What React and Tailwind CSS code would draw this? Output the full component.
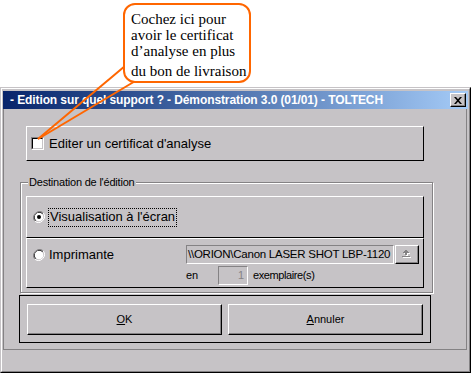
import React from "react";

const face = "bg-[#c6c3c6]";
const raised = "border border-t-white border-l-white border-b-black border-r-black";
const sunken = "border border-t-[#848284] border-l-[#848284] border-b-white border-r-white";

function Radio({ checked }) {
  return (
    <svg width="12" height="12" viewBox="0 0 12 12" className="shrink-0">
      <path d="M10.2 1.8 A6 6 0 0 0 1.8 10.2" fill="none" stroke="#848284" strokeWidth="1" />
      <path d="M9.5 2.5 A5 5 0 0 0 2.5 9.5" fill="none" stroke="#000" strokeWidth="1" />
      <path d="M1.8 10.2 A6 6 0 0 0 10.2 1.8" fill="none" stroke="#fff" strokeWidth="1" />
      <circle cx="6" cy="6" r="4.3" fill="#fff" />
      {checked && <circle cx="6" cy="6" r="2" fill="#000" />}
    </svg>
  );
}

function Checkbox() {
  return (
    <span className={`w-[13px] h-[13px] shrink-0 ${sunken}`}>
      <span className="block w-full h-full border border-t-black border-l-black border-b-[#c6c3c6] border-r-[#c6c3c6] bg-white" />
    </span>
  );
}

function Button({ children }) {
  return (
    <button className={`w-[195px] h-[31px] ${raised} shadow-[inset_-1px_-1px_0_#848284] text-[11px] text-black flex items-center justify-center`}>
      {children}
    </button>
  );
}

export default function App() {
  return (
    <div className="relative w-[471px] h-[373px] bg-white overflow-hidden font-['Liberation_Sans',Arial,sans-serif]">
      <div className="h-[87px]" />

      {/* window */}
      <div className={`h-[286px] ${face} border border-t-[#c6c3c6] border-l-[#c6c3c6] border-b-black border-r-black`}>
        <div className="h-full flex flex-col border border-t-white border-l-white border-b-[#848284] border-r-[#848284] pt-[2px] px-[1px] pb-[1px]">
          {/* title bar */}
          <div className="h-[18px] shrink-0 flex items-center justify-between pl-[7px] pr-[2px] bg-gradient-to-r from-[#08246b] to-[#a5cbf7]">
            <span className="text-white font-bold text-[12px] tracking-[-0.1px] whitespace-nowrap">
              - Edition sur quel support ? - Démonstration 3.0 (01/01) - TOLTECH
            </span>
            <span className={`w-[16px] h-[14px] flex items-center justify-center ${raised} shadow-[inset_-1px_-1px_0_#848284] bg-[#c6c3c6]`}>
              <svg width="8" height="7" viewBox="0 0 8 7">
                <path d="M0 0h2l2 2.2L6 0h2L5 3.5 8 7H6L4 4.8 2 7H0l3-3.5z" fill="#000" />
              </svg>
            </span>
          </div>

          {/* client panel */}
          <div className="h-[241px] w-[464px] shrink-0 border-l border-r border-b border-[#848284] flex flex-col pl-[15px] pt-[17px]">
            {/* checkbox frame */}
            <div className={`ml-[7px] w-[398px] h-[35px] ${raised} flex items-center pl-[4px]`}>
              <Checkbox />
              <span className="ml-[5px] text-[13px] text-black">Editer un certificat d'analyse</span>
            </div>

            {/* group box */}
            <div className="relative mt-[21px] ml-[1px] w-[413px] h-[111px] border border-[#848284] shadow-[inset_1px_1px_0_#fff,1px_1px_0_#fff] pl-[5px] pt-[13px]">
              <span className={`absolute -top-[8px] left-[7px] px-[1px] ${face} text-[11px] tracking-[-0.2px] text-black leading-[14px]`}>
                Destination de l'édition
              </span>
              <div className={`w-[398px] h-[42px] ${raised} flex items-center pl-[6px]`}>
                <Radio checked />
                <span className="ml-[3px] h-[19px] flex items-center px-px border border-dotted border-black text-[13px] text-black">
                  Visualisation à l'écran
                </span>
              </div>
              <div className={`w-[398px] h-[50px] ${raised} flex pl-[6px] pt-[6px]`}>
                <div className="w-[153px] h-[19px] flex items-center">
                  <Radio />
                  <span className="ml-[4px] text-[13px] text-black">Imprimante</span>
                </div>
                <div className="flex flex-col gap-[2px]">
                  <div className="flex gap-[1px]">
                    <div className={`w-[208px] h-[19px] ${sunken} flex items-center pl-[1px] overflow-hidden whitespace-nowrap text-[11.5px] tracking-[-0.25px] text-black`}>
                      \\ORION\Canon LASER SHOT LBP-1120
                    </div>
                    <div className={`w-[24px] h-[19px] ${raised} shadow-[inset_-1px_-1px_0_#848284] flex items-center justify-center`}>
                      <svg width="10" height="9" viewBox="0 0 10 9">
                        <g fill="#fff" transform="translate(1 1)">
                          <path d="M4 0h1v1h1v1h1v1H5v2H3V3H1V2h1V1h1V0z" />
                          <rect x="0" y="6" width="8" height="1" />
                        </g>
                        <g fill="#848284">
                          <path d="M4 0h1v1h1v1h1v1H5v2H3V3H1V2h1V1h1V0z" />
                          <rect x="0" y="6" width="8" height="1" />
                        </g>
                      </svg>
                    </div>
                  </div>
                  <div className="flex items-center h-[19px]">
                    <span className="w-[32px] text-[11px] text-black">en</span>
                    <div className={`w-[30px] h-[19px] ${sunken} flex items-center justify-end pr-[3px] text-[11px] text-[#848284]`}>
                      1
                    </div>
                    <span className="ml-[5px] text-[11px] tracking-[-0.4px] text-black">exemplaire(s)</span>
                  </div>
                </div>
              </div>
            </div>

            {/* buttons */}
            <div className="mt-[2px] w-[412px] h-[48px] border border-black flex gap-[6px] pl-[7px] pt-[8px]">
              <Button>
                <span className="underline">O</span>K
              </Button>
              <Button>
                <span className="underline">A</span>nnuler
              </Button>
            </div>
          </div>
        </div>
      </div>

      {/* callout tail */}
      <svg className="absolute left-0 top-0 pointer-events-none" width="471" height="373">
        <line x1="125" y1="66" x2="38" y2="139" stroke="#ff6600" strokeWidth="2" />
        <line x1="137" y1="80" x2="38" y2="139" stroke="#ff6600" strokeWidth="2" />
      </svg>

      {/* callout bubble */}
      <div className="absolute left-[123px] top-[3px] w-[128px] h-[80px] rounded-[12px] border-2 border-[#ff6600] bg-white pl-[6px] pt-[6px] font-['Liberation_Serif','Times_New_Roman',serif] text-[15px] text-black leading-[16px]">
        <div>Cochez ici pour</div>
        <div>avoir le certificat</div>
        <div>d’analyse en plus</div>
        <div className="mt-[4px]">du bon de livraison</div>
      </div>
    </div>
  );
}
